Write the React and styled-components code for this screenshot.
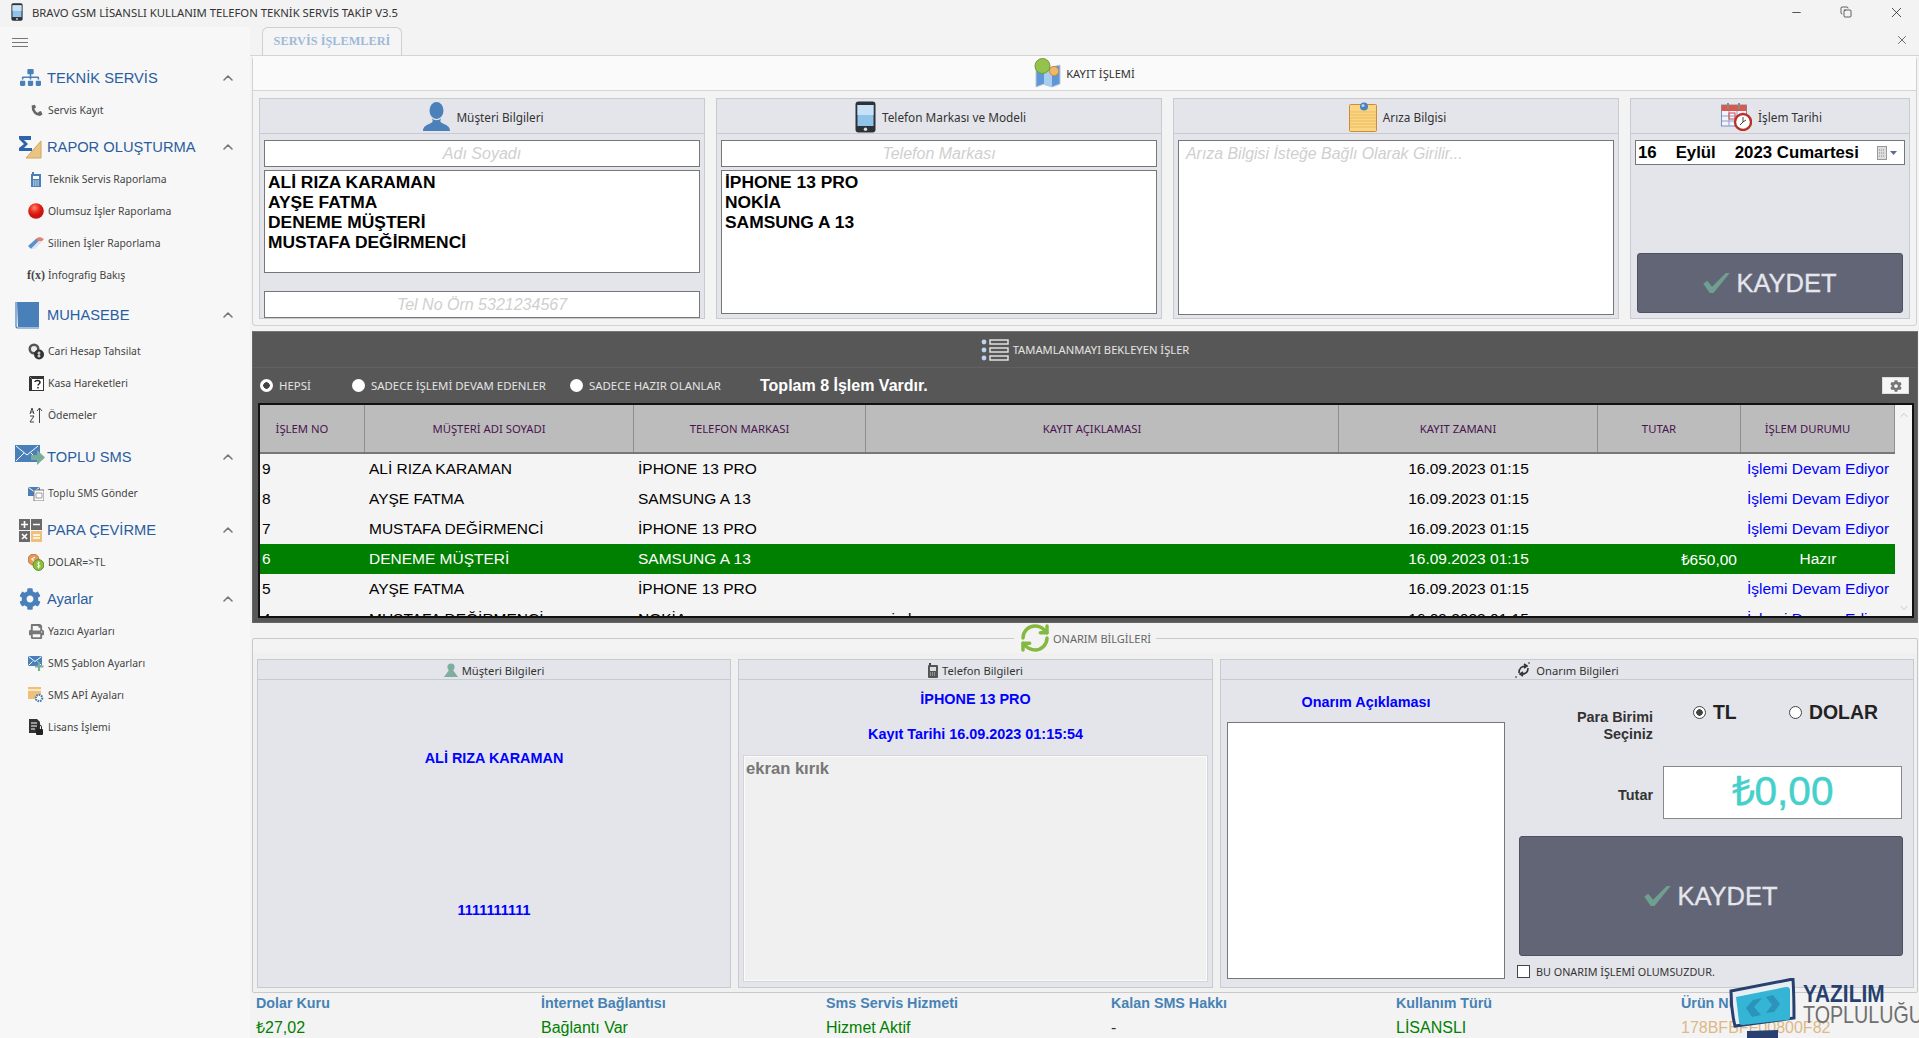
import React from "react";
import styled, { createGlobalStyle } from "styled-components";
import { ChevronUp, ChevronDown, Minus, Copy, X, RefreshCw } from "lucide-react";
import { FaSitemap, FaCog, FaPrint } from "react-icons/fa";

const UI = `"Noto Sans", "Open Sans", sans-serif`;
const MS = `"Liberation Sans", Arial, sans-serif`;

const Global = createGlobalStyle`
  *, *::before, *::after { box-sizing: border-box; }
  html, body { margin: 0; padding: 0; background: #f3f3f3; overflow: hidden; }
  body { font-family: ${UI}; color: #222; }
`;

const Win = styled.div`
  position: relative; width: 1919px; height: 1038px; overflow: hidden;
  display: flex; flex-direction: column; background: #f3f3f3;
`;
const TitleBar = styled.header`
  height: 27px; flex: none; display: flex; align-items: center; padding: 0 0 3px 11px; margin-right: -2px;
  font-size: 11.3px; color: #333;
`;
const TitleText = styled.span` margin-left: 9px; flex: 1; `;
const WinBtn = styled.span`
  width: 50px; display: flex; justify-content: center; color: #222;
`;
const BodyRow = styled.div` flex: 1; min-height: 0; display: flex; `;

/* sidebar */
const Side = styled.nav`
  width: 250px; flex: none; background: #f7f7f7; display: flex; flex-direction: column;
`;
const Burger = styled.div`
  height: 34px; padding: 11px 0 0 12px; flex: none; display: flex; align-items: flex-start;
`;
const SecHead = styled.div`
  height: ${p => p.$h}px; margin-top: ${p => p.$mt}px; display: flex; align-items: center; flex: none;
`;
const SecIcon = styled.span`
  width: 34px; margin-left: 13px; display: flex; justify-content: center; align-items: center;
`;
const SecTitle = styled.span`
  flex: 1; font-family: ${MS}; font-size: 14.7px; color: #2a5d9f; white-space: nowrap;
`;
const Chev = styled.span` width: 16px; margin-right: 14px; color: #777; display: flex; `;
const Item = styled.div`
  height: 32px; display: flex; align-items: center; flex: none; font-size: 10.4px; color: #444; white-space: nowrap;
`;
const ItemIcon = styled.span`
  width: 18px; margin: 0 3px 0 27px; display: flex; justify-content: center; align-items: center;
  color: #444; font-family: "Liberation Serif", serif; font-weight: 700; font-size: 12px;
`;

/* main */
const Main = styled.main` flex: 1; min-width: 0; display: flex; flex-direction: column; `;
const TabStrip = styled.div`
  height: 29px; flex: none; display: flex; justify-content: space-between; align-items: flex-start; padding-left: 12px;
  border-bottom: 1px solid #d4d4d4;
`;
const Tab = styled.div`
  width: 140px; height: 28px; border: 1px solid #cfcfcf; border-bottom: none; border-radius: 6px 6px 0 0;
  background: #f5f5f5; color: #9dbad8; font: 700 12.3px "Liberation Serif", serif;
  display: flex; align-items: center; justify-content: center;
`;
const TabClose = styled.span` margin: 6px 10px 0 0; color: #333; display: flex; `;
const Upper = styled.section`
  margin-left: 2px; width: 1665px; height: 270px; flex: none; border: 1px solid #d2d2d2; border-top: none;
  border-radius: 4px; background: #f3f3f3; display: flex; flex-direction: column;
`;
const PanelHead = styled.div`
  height: 35px; flex: none; background: #fafafa; border-bottom: 1px solid #d4d4d4;
  display: flex; align-items: center; justify-content: center; gap: 4px; font-size: 11.2px; color: #333;
`;
const UpperGrid = styled.div`
  display: grid; grid-template-columns: 446px 446px 446px 280px; gap: 11px; padding: 7px 0 0 6px; height: 228px;
`;
const Group = styled.div`
  border: 1px solid #c8cad2; background: #e4e5ea; display: flex; flex-direction: column; min-height: 0;
`;
const GroupHead = styled.div`
  height: 35px; flex: none; border-bottom: 1px solid #c8cad2; display: flex; align-items: center; justify-content: center;
  gap: 6px; font-size: 11.8px; color: #333; padding: 1px 0 0 3px;
`;
const SmallHead = styled.div`
  height: 20px; flex: none; border-bottom: 1px solid #c8cad2; display: flex; align-items: center; justify-content: center;
  gap: 4px; font-size: 11.2px; color: #333; padding-top: 1px;
`;
const GroupBody = styled.div`
  flex: 1; min-height: 0; padding: 6px 4px ${p => p.$pb}px; display: flex; flex-direction: column;
`;
const Field = styled.div`
  height: 27px; flex: none; background: #fff; border: 1px solid #777; text-align: center;
  font: italic 400 16px/25px ${MS}; color: #cfcfcf;
`;
const ListBox = styled.div`
  background: #fff; border: 1px solid #777; padding: 1px 3px; flex: ${p => p.$grow ? 1 : "none"};
  height: ${p => p.$h ? p.$h + "px" : "auto"}; margin-top: 3px; min-height: 0;
  font: 700 17.4px/20px ${MS}; color: #000;
`;
const Spacer = styled.div` flex: 1; `;
const Memo = styled.div`
  flex: 1; background: #fff; border: 1px solid #777; padding: 3px 7px;
  font: italic 400 15.9px/20px ${MS}; color: #cfcfcf;
`;
const DateBox = styled.div`
  height: 25px; flex: none; background: #fff; border: 1px solid #777; display: flex; align-items: center; padding: 0 5px 0 2px;
  font: 700 16.8px ${MS}; color: #000; white-space: nowrap;
`;
const DateYear = styled.span` margin-left: 19px; `;
const DatePick = styled.span` margin-left: auto; display: flex; align-items: center; gap: 1px; `;
const SaveBtn = styled.button`
  border: 1px solid #4e5160; border-radius: 3px; background: #626575; color: #e6e6ee; font: 400 25.5px ${MS};
  -webkit-text-stroke: .3px #e6e6ee;
  display: flex; align-items: center; justify-content: center; gap: 6px; padding: 0;
  width: ${p => p.$w}px; height: ${p => p.$h}px; flex: none; margin: ${p => p.$m};
`;

/* dark */
const Dark = styled.section`
  margin: 5px 0 0 2px; width: 1666px; height: 292px; flex: none; background: #575757; border: 1px solid #666;
  border-top-color: #777; display: flex; flex-direction: column; color: #e4e4e4;
`;
const DarkHead = styled.div`
  height: 36px; flex: none; border-bottom: 1px solid #616161; display: flex; align-items: center; justify-content: center;
  gap: 4px; font-size: 11.2px;
`;
const FilterRow = styled.div`
  height: 35px; flex: none; display: grid; grid-template-columns: 92px 218px 190px auto 1fr; align-items: center; padding: 0 8px 0 7px;
  font-size: 11.4px;
`;
const RadioWrap = styled.label` display: flex; align-items: center; gap: 6px; white-space: nowrap; `;
const RadioDot = styled.span`
  width: 13px; height: 13px; border-radius: 50%; background: ${p => p.$on ? "radial-gradient(circle,#444 0 3px,#fff 3.5px)" : "#fff"};
  flex: none;
`;
const Total = styled.span` font: 700 16px ${MS}; color: #fff; `;
const GearBtn = styled.span`
  justify-self: end; width: 27px; height: 17px; background: #f6f6f6; border: 1px solid #ddd; color: #777;
  display: flex; align-items: center; justify-content: center;
`;
const Frame = styled.div`
  margin-left: 5px; width: 1656px; flex: none; height: 215px; border: 2px solid #111; background: #f4f4f4;
  display: flex; overflow: hidden;
`;
const Table = styled.div` width: 1635px; flex: none; `;
const COLS = "105px 269px 232px 473px 259px 143px 154px";
const HeadRow = styled.div`
  display: grid; grid-template-columns: ${COLS}; height: 49px; background: #bcbcbc; border-bottom: 2px solid #777;
`;
const HeadCell = styled.div`
  display: flex; align-items: center; justify-content: center; border-right: 1px solid #8e8e8e;
  font-size: 11.3px; color: #4a1450; padding-right: 20px;
`;
const Row = styled.div`
  display: grid; grid-template-columns: ${COLS}; height: 30px; align-items: center; font: 400 15.5px ${MS};
  background: ${p => p.$on ? "#008000" : "#f4f4f4"}; color: ${p => p.$on ? "#fff" : "#000"};
`;
const Cell = styled.div`
  padding: 0 4px; white-space: nowrap; text-align: ${p => p.$a || "left"};
  color: ${p => p.$blue ? "#0000ff" : "inherit"};
`;
const NoCell = styled(Cell)` padding-left: 2px; `;
const Scroll = styled.div`
  flex: 1; display: flex; flex-direction: column; justify-content: space-between; align-items: center; padding: 4px 0 2px; color: #c8c8c8;
`;

/* lower */
const Field2 = styled.fieldset`
  margin: 1px 0 0 2px; width: 1666px; height: 369px; flex: none; padding: 0 4px 4px; border: 1px solid #c9c9c9; border-radius: 2px;
  background: linear-gradient(#f3f3f3 0 14px, #f0f0f0 14px); min-width: 0;
`;
const Legend = styled.legend`
  margin: 0 auto; padding: 0 5px; height: 28px; display: flex; align-items: center; gap: 2px; font-size: 11px; color: #666;
`;
const LowerGrid = styled.div`
  margin-top: 7px; height: 329px; display: grid; grid-template-columns: 474px 475px 694px; gap: 7px;
`;
const CenterCol = styled.div`
  flex: 1; display: flex; flex-direction: column; align-items: center; padding-top: 69px;
`;
const Blue = styled.div`
  font: 700 14.4px ${MS}; color: #0000ff; text-align: center; line-height: 18px; height: ${p => p.$h}px; flex: none;
`;
const PhoneCol = styled.div` flex: 1; min-height: 0; display: flex; flex-direction: column; padding: 10px 4px 5px; `;
const Note = styled.div`
  flex: 1; background: #f0f0f0; border: 2px solid #fbfbfb; outline: 1px solid #d6d6d6; outline-offset: -1px; padding: 1px; margin-top: 3px;
  font: 700 16.6px/22px ${MS}; color: #777;
`;
const RepairBody = styled.div`
  flex: 1; min-height: 0; display: grid; grid-template-columns: 298px 1fr; padding-right: 9px;
`;
const RepairLeft = styled.div` display: flex; flex-direction: column; padding: 13px 0 7px 6px; `;
const RepTitle = styled.div`
  height: 18px; width: 278px; text-align: center; font: 700 14.4px/18px ${MS}; color: #0000ff;
`;
const RepBox = styled.div`
  margin-top: 11px; width: 278px; height: 257px; background: #fff; border: 1px solid #777;
`;
const RepairRight = styled.div` display: flex; flex-direction: column; `;
const CurRow = styled.div`
  margin-top: 24px; height: 36px; display: grid; grid-template-columns: 134px 1fr; column-gap: 40px;
`;
const FormLabel = styled.div`
  font: 700 14.4px/17px ${MS}; color: #333; text-align: right; align-self: ${p => p.$c ? "center" : "start"};
  margin-top: ${p => p.$c ? 6 : 5}px;
`;
const Radios = styled.div`
  display: flex; align-items: flex-start; margin-top: -3px; font: 700 19.4px/22px ${MS}; color: #222;
`;
const CurRadio = styled.span` display: flex; align-items: center; gap: 7px; width: 96px; `;
const RadioRing = styled.span`
  width: 13px; height: 13px; border-radius: 50%; border: 1px solid #444; background: ${p => p.$on ? "radial-gradient(circle,#444 0 3px,#fff 3.5px)" : "#fff"}; flex: none;
`;
const AmountRow = styled.div`
  margin-top: 26px; height: 53px; display: grid; grid-template-columns: 134px 239px; column-gap: 10px; align-items: center;
`;
const Amount = styled.div`
  height: 53px; background: #fff; border: 1px solid #888; text-align: center; font: 400 40.5px/49px ${MS}; color: #45d0cc;
  -webkit-text-stroke: .5px #45d0cc;
`;
const CheckRow = styled.label`
  margin: 8px 0 0 -2px; display: flex; align-items: center; gap: 6px; font-size: 10.8px; color: #333; white-space: nowrap;
`;
const CheckBox = styled.span` width: 13px; height: 13px; background: #fff; border: 1px solid #444; flex: none; `;

/* footer */
const Foot = styled.footer`
  flex: 1; display: grid; grid-template-columns: repeat(6, 285px); padding: 1px 0 0 6px; grid-auto-rows: min-content;
`;
const Stat = styled.div` display: flex; flex-direction: column; `;
const StatLabel = styled.span` font: 700 14.3px/18px ${MS}; color: #4682b4; white-space: nowrap; `;
const StatValue = styled.span` margin-top: 6px; font: 400 16px/20px ${MS}; color: ${p => p.$c || "#008000"}; white-space: nowrap; `;
const Logo = styled.div`
  position: absolute; left: 1729px; top: 978px; width: 190px; height: 60px; overflow: hidden;
`;
const LogoMain = styled.span`
  position: absolute; left: 74px; top: 2px; font: 700 24px/28px ${MS}; color: #27406f; transform: scaleX(.87); transform-origin: left;
`;
const LogoSub = styled.span`
  position: absolute; left: 74px; top: 23px; font: 400 24px/28px ${MS}; color: #6f6f6f; transform: scaleX(.82); transform-origin: left; white-space: nowrap;
`;

/* drawings */
const Hamburger = () => (
  <svg width="16" height="10" viewBox="0 0 16 10" stroke="#777"><path d="M0 .5h16M0 4.500h16M0 8.500h16"/></svg>
);
const Handset = () => (
  <svg width="13" height="13" viewBox="0 0 13 13" fill="none"><path d="M3 2.500C2.500 7 6 11 10.500 10.500" stroke="#666" strokeWidth="2.600"/><path d="M1.500 1.500L5 .8l1 3-3 1zM8 8l3-1 1.500 3.500-3 1.500z" fill="#666"/></svg>
);
const PersonBig = () => (
  <svg width="27" height="29" viewBox="0 0 27 29"><ellipse cx="13.5" cy="8.5" rx="7" ry="8.5" fill="#4b80ba"/><path d="M9 16c1 3 1 4-1 5-4 2-8 3-8 8h27c0-5-4-6-8-8-2-1-2-2-1-5-2 3-7 3-9 0z" fill="#4b80ba"/></svg>
);
const PhoneBig = ({ w = 21, h = 32 }) => (
  <svg width={w} height={h} viewBox="0 0 21 32"><rect x=".5" y=".5" width="20" height="31" rx="3" fill="#2d3138"/><rect x="2.5" y="4" width="16" height="21" fill="#8fc3ea"/><rect x="2.5" y="4" width="16" height="10" fill="#c7e2f6"/><circle cx="10.5" cy="28.3" r="1.7" fill="#ddd"/></svg>
);
const Notepad = () => (
  <svg width="28" height="30" viewBox="0 0 28 30"><rect x=".5" y="2.5" width="27" height="27" rx="1" fill="#f8d683" stroke="#d08a3a"/><path d="M1 10h26M1 13h26M1 16h26M1 19h26M1 22h26M1 25h26" stroke="#edb95a"/><circle cx="15" cy="4.5" r="4" fill="#4b83c0"/><circle cx="14" cy="3.5" r="1.5" fill="#b7d4ee"/></svg>
);
const CalClock = () => (
  <svg width="31" height="29" viewBox="0 0 31 29"><rect x=".5" y="3" width="25" height="21" fill="#f3f5fa" stroke="#7a8fc0"/><rect x=".5" y="3" width="25" height="6" rx="1" fill="#d9594c"/><path d="M7 1v6M18 1v6" stroke="#888" strokeWidth="2"/><path d="M1 14h24M1 19h24M8 9v15M16 9v15" stroke="#8aa0d0"/><rect x="8" y="11" width="6" height="6" fill="none" stroke="#d44"/><circle cx="22" cy="20" r="8" fill="#fff" stroke="#b9322a" strokeWidth="2.4"/><path d="M22 15v5l-3 3M22 20l3-2" stroke="#444" fill="none"/></svg>
);
const MapPin = () => (
  <svg width="28" height="30" viewBox="0 0 28 30"><path d="M2 9l8 3 8-3 8-2v19l-8 3-8-3-8 3z" fill="#5f97d6" stroke="#b9c9db"/><path d="M10 12v15l8 2V9z" fill="#a9cdee"/><circle cx="8.5" cy="8" r="7.5" fill="#93c24e" stroke="#6f9a36"/><circle cx="20" cy="13" r="4.6" fill="#f0b86a" stroke="#c98a3a"/></svg>
);
const ListIcon = () => (
  <svg width="28" height="24" viewBox="0 0 28 24" fill="none"><g fill="#bcd4f2"><circle cx="3" cy="4" r="2.4"/><circle cx="3" cy="12" r="2.4"/><circle cx="3" cy="20" r="2.4"/></g><g stroke="#e8e8e8" strokeWidth="1.4"><rect x="9" y="2" width="18" height="4"/><rect x="9" y="10" width="18" height="4"/><rect x="9" y="18" width="18" height="4"/></g></svg>
);
const SmallPerson = () => (
  <svg width="14" height="14" viewBox="0 0 14 14"><circle cx="7" cy="4" r="3.6" fill="#7fae9f"/><path d="M5 7l-5 7h14L9 7z" fill="#7fae9f"/></svg>
);
const SmallPhone = () => (
  <svg width="10" height="15" viewBox="0 0 10 15"><rect x="1" width="2" height="3" fill="#444"/><rect y="2" width="10" height="13" rx="1" fill="#555"/><rect x="2" y="4" width="6" height="4" fill="#ddd"/><path d="M2 10h6M2 12h6" stroke="#ccc" strokeDasharray="1 1"/></svg>
);
const ABSwap = () => (
  <svg width="17" height="16" viewBox="0 0 17 16" fill="none" stroke="#333" strokeWidth="1.6"><path d="M4 11c0-5 3-7 7-7M9 2l3 2-3 2M13 6c0 5-3 6-6 6M8 10l-3 2 3 2"/><path d="M13 1h2M0 15h2" strokeWidth="1"/></svg>
);
const Check = ({ s = 27 }) => (
  <svg width={s} height={s * .76} viewBox="0 0 27 21"><path d="M0 11l4-3 5 6L23 0h4L10 21h-3z" fill="#6f9f90"/></svg>
);
const CalMini = () => (
  <svg width="22" height="14" viewBox="0 0 22 14"><rect x=".5" y=".5" width="9" height="13" fill="#ddd" stroke="#999"/><path d="M2 4h6M2 7h6M2 10h6" stroke="#888" strokeDasharray="1 1"/><path d="M13 5h7l-3.5 4z" fill="#5b6c95"/></svg>
);
const Sigma = () => (
  <svg width="24" height="24" viewBox="0 0 24 24"><path d="M8 23L23 6v17z" fill="#e8c583" stroke="#d2a65a"/><path d="M1 1h12v4H6l4 4-4 4h8v3H1v-3l5-4-5-5z" fill="#2e63ad"/></svg>
);
const Book = () => (
  <svg width="30" height="28" viewBox="0 0 30 28"><path d="M2 1h22v25H3z" fill="#4a80ba"/><path d="M1 1v24c0 2 1 2 2 2h21" stroke="#4a80ba" fill="none" strokeWidth="1.2"/></svg>
);
const MailArrow = () => (
  <svg width="30" height="25" viewBox="0 0 30 25"><rect y="0" width="25" height="17" fill="#4a80ba"/><path d="M1 1l11 9 11-9M1 16l8-8M24 16l-8-8" stroke="#fff" fill="none" strokeWidth="1"/><path d="M16 10h6V5l8 7.5L22 20v-5h-6z" fill="#78ad9c"/></svg>
);
const MathGrid = () => (
  <svg width="23" height="23" viewBox="0 0 23 23"><rect width="11" height="11" fill="#696969"/><rect x="12" width="11" height="11" fill="#696969"/><rect y="12" width="11" height="11" fill="#696969"/><rect x="12" y="12" width="11" height="11" fill="#efc079"/><path d="M2 5.500h7M5.500 2v7M14 5.500h7M3 15l5 5M8 15l-5 5M14 16h7M14 19h7" stroke="#fff" strokeWidth="1.6"/></svg>
);
const Calc = () => (
  <svg width="10" height="15" viewBox="0 0 10 15"><rect width="2" height="3" x="1" fill="#4a80ba"/><rect y="2" width="10" height="13" fill="#4a80ba"/><rect x="2" y="4" width="6" height="3" fill="#fff"/><path d="M2 9h6M2 11h6M2 13h6" stroke="#fff" strokeDasharray="1.400 .8"/></svg>
);
const RedDot = () => (
  <svg width="16" height="16" viewBox="0 0 16 16"><defs><radialGradient id="rd" cx=".4" cy=".3"><stop offset="0" stopColor="#ff8a70"/><stop offset=".6" stopColor="#ee2a1e"/><stop offset="1" stopColor="#c9160e"/></radialGradient></defs><circle cx="8" cy="8" r="7.800" fill="url(#rd)"/></svg>
);
const Eraser = () => (
  <svg width="16" height="13" viewBox="0 0 16 13"><path d="M0 9l9-8 2 3-8 8z" fill="#5a8fd0"/><path d="M9 1l3-1 4 2-5 5-2-3z" fill="#e37f70"/><path d="M3 12l8-8 3 0-7 8z" fill="#d9e5f2"/></svg>
);
const Coins = () => (
  <svg width="16" height="17" viewBox="0 0 16 17"><circle cx="6" cy="6" r="5.500" fill="#555"/><circle cx="6" cy="6" r="3" fill="#eee"/><circle cx="11" cy="11.500" r="5" fill="#333"/><path d="M11 8.500v6M9.500 10h3M9.500 13h3" stroke="#fff"/></svg>
);
const Question = () => (
  <svg width="16" height="16" viewBox="0 0 16 16"><rect x="1" y="1" width="15" height="15" fill="#333"/><rect x="4" y="4" width="11" height="11" fill="#fff"/><path d="M7 7c0-2 5-2 5 .5 0 1.500-2 1.500-2 3M10 12v1.500" stroke="#222" strokeWidth="1.500" fill="none"/><path d="M1 1l3 3" stroke="#888"/></svg>
);
const AZ = () => (
  <svg width="14" height="16" viewBox="0 0 14 16" fill="none" stroke="#444"><path d="M1 7l2-6 2 6M1.800 5h2.400M1 9h4l-4 6h4"/><path d="M10.500 16V1M8 4l2.500-3L13 4"/></svg>
);
const MailBox = () => (
  <svg width="16" height="15" viewBox="0 0 16 15"><rect y="1" width="12" height="9" fill="#4a80ba"/><path d="M.500 1.500l5.500 4 5.500-4" stroke="#fff" fill="none"/><rect x="6" y="4" width="10" height="11" fill="#fff" stroke="#777"/><path d="M8 7h6v5H8z" fill="none" stroke="#999"/></svg>
);
const DollarCoins = () => (
  <svg width="16" height="17" viewBox="0 0 16 17"><circle cx="5.500" cy="5.500" r="5.400" fill="#e69a5c" stroke="#b86d30"/><path d="M7 3.500C4 3 3 7 7 7.500M3 5h3" stroke="#fff" fill="none"/><circle cx="10.500" cy="11" r="5.400" fill="#8cbe3f" stroke="#5f8e24"/><path d="M12 9c-3-1-3 2 0 2.500 1 1-1 2.500-3 1M10.500 7.500v7" stroke="#fff" fill="none" strokeWidth=".8"/></svg>
);
const MailPlus = () => (
  <svg width="16" height="15" viewBox="0 0 16 15"><rect width="14" height="10" fill="#4a80ba"/><path d="M.500.500l6.500 5 6.500-5M.500 9.500l4-4M13.500 9.500l-4-4" stroke="#fff" fill="none"/><path d="M11 6v9M7 10.500h8.500" stroke="#78ad9c" strokeWidth="2.200"/></svg>
);
const WindowGear = () => (
  <svg width="16" height="16" viewBox="0 0 16 16"><rect width="13" height="12" y="0" fill="#efc079"/><rect width="13" height="2" y="2" fill="#fbe6c4"/><circle cx="11" cy="11" r="3.200" fill="#fff" stroke="#4a80ba" strokeWidth="2.200" strokeDasharray="1.600 .8"/></svg>
);
const DocLock = () => (
  <svg width="14" height="16" viewBox="0 0 14 16"><path d="M0 0h8l3 3v11H0z" fill="#333"/><path d="M2 4h6M2 7h6M2 10h4" stroke="#fff"/><rect x="7" y="10" width="7" height="6" rx="1" fill="#222"/><path d="M8.500 10V8a2 2 0 0 1 4 0v2" stroke="#222" fill="none"/></svg>
);
const LogoMark = () => (
  <svg width="68" height="60" viewBox="0 0 68 60"><path d="M2 13L64 1c1 16 1 31 1 39L6 48C3 36 2 24 2 13z" fill="#e9eef2" stroke="#27406f" strokeWidth="3"/><path d="M7 19l50-10c3-.5 4 1 4 3v28c0 1-1 2-3 2l-44 5c-3 0-4-1-4-3z" fill="#34b5d6"/><path d="M24 22l9-2-8 9 7 8-9 2-6-9zM44 17l-7 2 6 8-6 8 8-1 6-8z" fill="#2c93ba"/><path d="M18 53l31-1v8H18z" fill="#27406f"/></svg>
);

const sections = [
  { t: "TEKNİK SERVİS", h: 33, mt: 0, i: <FaSitemap size={21} color="#4a80ba" />, items: [[<Handset />, "Servis Kayıt"]] },
  { t: "RAPOR OLUŞTURMA", h: 33, mt: 4, i: <Sigma />, items: [[<Calc />, "Teknik Servis Raporlama"], [<RedDot />, "Olumsuz İşler Raporlama"], [<Eraser />, "Silinen İşler Raporlama"], ["f(x)", "İnfografig Bakış"]] },
  { t: "MUHASEBE", h: 41, mt: 3, i: <Book />, items: [[<Coins />, "Cari Hesap Tahsilat"], [<Question />, "Kasa Hareketleri"], [<AZ />, "Ödemeler"]] },
  { t: "TOPLU SMS", h: 40, mt: 6, i: <MailArrow />, items: [[<MailBox />, "Toplu SMS Gönder"]] },
  { t: "PARA ÇEVİRME", h: 32, mt: 5, i: <MathGrid />, items: [[<DollarCoins />, "DOLAR=>TL"]] },
  { t: "Ayarlar", h: 32, mt: 5, i: <FaCog size={22} color="#4a80ba" />, items: [[<FaPrint size={15} color="#777" />, "Yazıcı Ayarları"], [<MailPlus />, "SMS Şablon Ayarları"], [<WindowGear />, "SMS APİ Ayaları"], [<DocLock />, "Lisans İşlemi"]] },
];

const rows = [
  ["9", "ALİ RIZA KARAMAN", "İPHONE 13 PRO", "", "16.09.2023 01:15", "", "İşlemi Devam Ediyor"],
  ["8", "AYŞE FATMA", "SAMSUNG A 13", "", "16.09.2023 01:15", "", "İşlemi Devam Ediyor"],
  ["7", "MUSTAFA DEĞİRMENCİ", "İPHONE 13 PRO", "", "16.09.2023 01:15", "", "İşlemi Devam Ediyor"],
  ["6", "DENEME MÜŞTERİ", "SAMSUNG A 13", "", "16.09.2023 01:15", "₺650,00", "Hazır"],
  ["5", "AYŞE FATMA", "İPHONE 13 PRO", "", "16.09.2023 01:15", "", "İşlemi Devam Ediyor"],
  ["4", "MUSTAFA DEĞİRMENCİ", "NOKİA", "şarj almıyor", "16.09.2023 01:15", "", "İşlemi Devam Ediyor"],
];
const heads = ["İŞLEM NO", "MÜŞTERİ ADI SOYADI", "TELEFON MARKASI", "KAYIT AÇIKLAMASI", "KAYIT ZAMANI", "TUTAR", "İŞLEM DURUMU"];
const stats = [
  ["Dolar Kuru", "₺27,02"], ["İnternet Bağlantısı", "Bağlantı Var"], ["Sms Servis Hizmeti", "Hizmet Aktif"],
  ["Kalan SMS Hakkı", "-", "#333"], ["Kullanım Türü", "LİSANSLI"], ["Ürün Numarası", "178BFBFF00800F82", "#deb887"],
];

export default function App() {
  return (
    <Win>
      <Global />
      <TitleBar>
        <PhoneBig w={12} h={18} />
        <TitleText>BRAVO GSM LİSANSLI KULLANIM TELEFON TEKNİK SERVİS TAKİP V3.5</TitleText>
        <WinBtn><Minus size={13} strokeWidth={1.4} /></WinBtn>
        <WinBtn><Copy size={12} strokeWidth={1.4} /></WinBtn>
        <WinBtn><X size={17} strokeWidth={1.1} /></WinBtn>
      </TitleBar>
      <BodyRow>
        <Side>
          <Burger><Hamburger /></Burger>
          {sections.map(s => (
            <React.Fragment key={s.t}>
              <SecHead $h={s.h} $mt={s.mt}>
                <SecIcon>{s.i}</SecIcon>
                <SecTitle>{s.t}</SecTitle>
                <Chev><ChevronUp size={16} strokeWidth={2.4} /></Chev>
              </SecHead>
              {s.items.map(([ic, label]) => (
                <Item key={label}><ItemIcon>{ic}</ItemIcon>{label}</Item>
              ))}
            </React.Fragment>
          ))}
        </Side>
        <Main>
          <TabStrip>
            <Tab>SERVİS İŞLEMLERİ</Tab>
            <TabClose><X size={14} strokeWidth={1.2} /></TabClose>
          </TabStrip>
          <Upper>
            <PanelHead><MapPin />KAYIT İŞLEMİ</PanelHead>
            <UpperGrid>
              <Group>
                <GroupHead><PersonBig />Müşteri Bilgileri</GroupHead>
                <GroupBody $pb={0}>
                  <Field>Adı Soyadı</Field>
                  <ListBox $h={103}>
                    <div>ALİ RIZA KARAMAN</div><div>AYŞE FATMA</div><div>DENEME MÜŞTERİ</div><div>MUSTAFA DEĞİRMENCİ</div>
                  </ListBox>
                  <Spacer />
                  <Field>Tel No Örn 5321234567</Field>
                </GroupBody>
              </Group>
              <Group>
                <GroupHead><PhoneBig />Telefon Markası ve Modeli</GroupHead>
                <GroupBody $pb={4}>
                  <Field>Telefon Markası</Field>
                  <ListBox $grow>
                    <div>İPHONE 13 PRO</div><div>NOKİA</div><div>SAMSUNG A 13</div>
                  </ListBox>
                </GroupBody>
              </Group>
              <Group>
                <GroupHead><Notepad />Arıza Bilgisi</GroupHead>
                <GroupBody $pb={3}>
                  <Memo>Arıza Bilgisi İsteğe Bağlı Olarak Girilir...</Memo>
                </GroupBody>
              </Group>
              <Group>
                <GroupHead><CalClock />İşlem Tarihi</GroupHead>
                <GroupBody $pb={5}>
                  <DateBox>
                    16<DateYear>Eylül</DateYear><DateYear>2023 Cumartesi</DateYear>
                    <DatePick><CalMini /></DatePick>
                  </DateBox>
                  <Spacer />
                  <SaveBtn $w={266} $h={60} $m="0 0 0 2px"><Check />KAYDET</SaveBtn>
                </GroupBody>
              </Group>
            </UpperGrid>
          </Upper>
          <Dark>
            <DarkHead><ListIcon />TAMAMLANMAYI BEKLEYEN İŞLER</DarkHead>
            <FilterRow>
              <RadioWrap><RadioDot $on />HEPSİ</RadioWrap>
              <RadioWrap><RadioDot />SADECE İŞLEMİ DEVAM EDENLER</RadioWrap>
              <RadioWrap><RadioDot />SADECE HAZIR OLANLAR</RadioWrap>
              <Total>Toplam 8 İşlem Vardır.</Total>
              <GearBtn><FaCog size={12} /></GearBtn>
            </FilterRow>
            <Frame>
              <Table>
                <HeadRow>
                  {heads.map(h => <HeadCell key={h}>{h}</HeadCell>)}
                </HeadRow>
                {rows.map(r => (
                  <Row key={r[0]} $on={r[0] === "6"}>
                    <NoCell>{r[0]}</NoCell>
                    <Cell>{r[1]}</Cell>
                    <Cell>{r[2]}</Cell>
                    <Cell>{r[3]}</Cell>
                    <Cell $a="center">{r[4]}</Cell>
                    <Cell $a="right">{r[5]}</Cell>
                    <Cell $a="center" $blue={r[0] !== "6"}>{r[6]}</Cell>
                  </Row>
                ))}
              </Table>
              <Scroll><ChevronUp size={12} /><ChevronDown size={12} /></Scroll>
            </Frame>
          </Dark>
          <Field2>
            <Legend><RefreshCw size={32} strokeWidth={2.6} color="#84b93f" />ONARIM BİLGİLERİ</Legend>
            <LowerGrid>
              <Group>
                <SmallHead><SmallPerson />Müşteri Bilgileri</SmallHead>
                <CenterCol>
                  <Blue $h={152}>ALİ RIZA KARAMAN</Blue>
                  <Blue $h={18}>1111111111</Blue>
                </CenterCol>
              </Group>
              <Group>
                <SmallHead><SmallPhone />Telefon Bilgileri</SmallHead>
                <PhoneCol>
                  <Blue $h={35}>İPHONE 13 PRO</Blue>
                  <Blue $h={27}>Kayıt Tarihi 16.09.2023 01:15:54</Blue>
                  <Note>ekran kırık</Note>
                </PhoneCol>
              </Group>
              <Group>
                <SmallHead><ABSwap />Onarım Bilgileri</SmallHead>
                <RepairBody>
                  <RepairLeft>
                    <RepTitle>Onarım Açıklaması</RepTitle>
                    <RepBox />
                  </RepairLeft>
                  <RepairRight>
                    <CurRow>
                      <FormLabel>Para Birimi<br />Seçiniz</FormLabel>
                      <Radios>
                        <CurRadio><RadioRing $on />TL</CurRadio>
                        <CurRadio><RadioRing />DOLAR</CurRadio>
                      </Radios>
                    </CurRow>
                    <AmountRow>
                      <FormLabel $c>Tutar</FormLabel>
                      <Amount>₺0,00</Amount>
                    </AmountRow>
                    <SaveBtn $w={384} $h={120} $m="17px 0 0 0"><Check />KAYDET</SaveBtn>
                    <CheckRow><CheckBox />BU ONARIM İŞLEMİ OLUMSUZDUR.</CheckRow>
                  </RepairRight>
                </RepairBody>
              </Group>
            </LowerGrid>
          </Field2>
          <Foot>
            {stats.map(([l, v, c]) => (
              <Stat key={l}><StatLabel>{l}</StatLabel><StatValue $c={c}>{v}</StatValue></Stat>
            ))}
          </Foot>
        </Main>
      </BodyRow>
      <Logo>
        <LogoMark />
        <LogoMain>YAZILIM</LogoMain>
        <LogoSub>TOPLULUĞU</LogoSub>
      </Logo>
    </Win>
  );
}
